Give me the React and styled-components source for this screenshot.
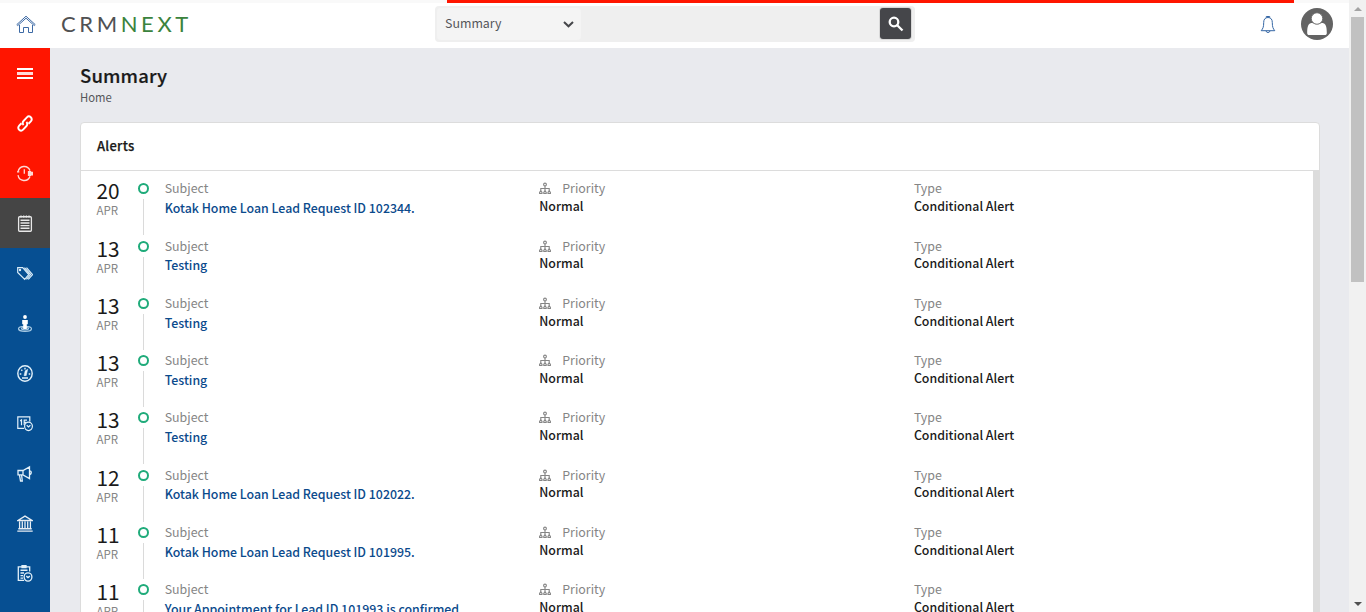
import React from 'react';
import styled, { createGlobalStyle } from 'styled-components';

const Global = createGlobalStyle`
  * { box-sizing: border-box; }
  body { margin: 0; overflow: hidden; font-family: "Noto Sans CJK SC", "Noto Sans", sans-serif; color: #1a1a1a; background: #e9eaee; }
`;

const Page = styled.div`display: flex; width: 1366px; height: 612px; overflow: hidden;`;
const Shell = styled.div`display: flex; flex-direction: column; width: 1349px; height: 612px; overflow: hidden;`;
const Progress = styled.div`height: 3px; flex: none; background: #f9f9f9;`;
const ProgressBar = styled.div`height: 3px; width: 847px; margin-left: 447px; background: #ff1500;`;
const Header = styled.header`display: flex; height: 45px; flex: none; background: #fff;`;
const HomeLink = styled.div`width: 61px; padding: 12px 0 0 16px;`;
const Logo = styled.div`
  width: 374px; padding-top: 6px; font: 400 22px/30px Lato, sans-serif; letter-spacing: 3.6px; color: #505153; white-space: nowrap;
`;
const LogoAccent = styled.span`color: #3b833d;`;
const Search = styled.div`
  display: flex; width: 480px; height: 36px; margin-top: 3px; padding: 2px; border-radius: 4px; background: #efefef;
`;
const SearchScope = styled.div`
  display: flex; justify-content: space-between; align-items: center; width: 144px; height: 32px; padding: 0 7px 0 8px;
  border-radius: 4px; background: #f4f4f4; color: #55565a; font-size: 12.4px; line-height: 20px;
`;
const ScopeName = styled.span`padding-bottom: 2px;`;
const SearchButton = styled.div`
  display: flex; align-items: center; justify-content: center; width: 31px; height: 31px; margin-left: auto; margin-right: 2px;
  border-radius: 3px; background: #45464a; box-shadow: 0 0 0 1px #d8d8d8;
`;
const Bell = styled.div`margin: 12px 0 0 345px; width: 41px;`;
const Avatar = styled.div`margin-top: 5px;`;
const Body = styled.div`display: flex; flex: 1; min-height: 0;`;
const Sidebar = styled.nav`width: 50px; flex: none; background: #064f92;`;
const NavItem = styled.div`
  display: flex; align-items: center; justify-content: center; height: 50px; padding-top: 1px; background: ${p => p.$bg || '#064f92'};
`;
const Main = styled.main`flex: 1; min-width: 0; padding: 15px 29px 0 30px; overflow: hidden;`;
const Title = styled.h1`
  margin: 0; font-size: 18.500px; line-height: 24px; font-weight: 500; letter-spacing: .15px; -webkit-text-stroke: .2px currentColor;
`;
const Crumb = styled.div`margin-top: 1px; height: 34px; font-size: 11.3px; line-height: 18px; color: #55565a;`;
const Card = styled.section`height: 560px; border: 1px solid #dcdcdc; border-radius: 4px; background: #fff; overflow: hidden;`;
const CardHead = styled.h2`
  margin: 0; height: 48px; padding: 0 16px; font-size: 13px; line-height: 45px; font-weight: 500; letter-spacing: .25px;
  -webkit-text-stroke: .25px currentColor; border-bottom: 1px solid #dcdcdc;
`;
const CardBody = styled.div`display: flex; height: 512px;`;
const Rows = styled.div`flex: 1; padding-top: 8.49px;`;
const InnerTrack = styled.div`width: 6px; background: #dcdcdc;`;
const Row = styled.div`display: flex; height: 57.26px; padding-left: 15.500px;`;
const DateCell = styled.div`width: 41.500px;`;
const Day = styled.div`height: 22px; font-size: 20.800px; line-height: 22px;`;
const Month = styled.div`padding-top: .9px; font-size: 11.500px; line-height: 17px; color: #858585;`;
const Marker = styled.div`display: flex; flex-direction: column; align-items: center; width: 11px; margin-right: 15.700px; padding-top: 4px;`;
const Ring = styled.div`width: 11px; height: 11px; border: 2px solid #1fab7a; border-radius: 50%;`;
const Line = styled.div`width: 1px; height: 36px; margin-top: 5px; background: #dadada;`;
const Cell = styled.div`width: ${p => p.$w || 374.6}px;`;
const Label = styled.div`display: flex; align-items: center; gap: 10px; height: 18px; font-size: 12.4px; line-height: 18px; color: #858585;`;
const Value = styled.div`
  margin-top: -.3px; font-size: 12.36px; line-height: 18px; font-weight: 500; white-space: nowrap;
  ${p => p.$link && 'color: #0b4a8c; padding-top: 1.95px;'}
`;
const Scrollbar = styled.div`display: flex; flex-direction: column; align-items: center; width: 17px; height: 612px; background: #f1f1f1;`;
const ScrollEnd = styled.div`display: flex; align-items: center; justify-content: center; height: 17px;`;
const Thumb = styled.div`width: 13px; height: 265px; margin-bottom: auto; background: #c1c1c1;`;

const Icon = ({ stroke = '#fff', width = 1.1, children }) => (
  <svg width="16" height="17" viewBox="0 0 16 16" preserveAspectRatio="none" fill="none" stroke={stroke} strokeWidth={width}>{children}</svg>
);

const HomeIcon = () => (
  <svg width="20" height="19" viewBox="0 0 20 19" fill="none" stroke="#3d6aa5" strokeWidth="1">
    <path d="M.8 9.6 10 1.2l9.2 8.4-1 .9L10 3.2 1.8 10.500z" />
    <path d="M3.500 10v7.500h4v-5h5v5h4V10" />
  </svg>
);
const BellIcon = () => (
  <svg width="16" height="20" viewBox="0 0 16 20" fill="none" stroke="#3567a5" strokeWidth="1">
    <path d="M6.300 2.500V1.500h3.400v1M8 2.500c-3 0-4.300 2-4.300 5C3.700 12 3 13.500 1.200 15.700h13.600C13 13.500 12.300 12 12.300 7.500c0-3-1.300-5-4.300-5zM6 16c.3 2 3.700 2 4 0" />
  </svg>
);
const AvatarIcon = () => (
  <svg width="32" height="32" viewBox="0 0 32 32">
    <circle cx="16" cy="16" r="16" fill="#636363" />
    <path d="M6.200 25c0-5 .5-8.800 3.300-9.800 1.300-.5 2.500-.4 3.500.2 1.800 1.200 4.200 1.200 6 0 1-.6 2.200-.7 3.500-.2 2.800 1 3.300 4.800 3.300 9.800 0 1.500-.7 2-2 2H8.200c-1.300 0-2-.5-2-2z" fill="#fff" />
    <circle cx="16" cy="10.500" r="5.700" fill="#fff" stroke="#636363" strokeWidth=".8" />
  </svg>
);
const TreeIcon = () => (
  <svg width="13" height="14" viewBox="0 0 13 14" fill="none" stroke="#858585" strokeWidth="1.100">
    <circle cx="6" cy="3.500" r="1.400" /><path d="M6 5v5M1.800 10V7.500h8.400V10" />
    <path d="M.6 12.500v-1.200l1.200-1.200L3 11.300v1.200zM4.800 12.500v-1.200L6 10.100l1.200 1.200v1.200zM9 12.500v-1.200l1.200-1.200 1.200 1.200v1.200z" />
  </svg>
);

const MenuIcon = () => (
  <svg width="16" height="11" viewBox="0 0 16 11" fill="#fff"><path d="M0 0h16v2H0zM0 9h16v2H0z" /><path d="M0 4h16v3H0z" opacity=".85" /></svg>
);
const LinkIcon = () => (
  <Icon width={1.900}>
    <path d="M6.600 9.400C5.300 8 5.500 6.700 6.500 5.700l3.400-3.500c1.200-1.200 2.800-1.100 3.900-.1 1.100 1.100 1.100 2.700 0 3.900l-2.300 2.300" />
    <path d="M9.400 6.600c1.300 1.400 1.100 2.700.1 3.700l-3.400 3.500c-1.200 1.200-2.800 1.100-3.900.1-1.100-1.100-1.100-2.700 0-3.900l2.300-2.300" />
  </Icon>
);
const ClockIcon = () => (
  <Icon stroke="#ffd9d5" width={1.300}>
    <path d="M1 6.500A6.300 6.300 0 0 1 13 5.300M1 9.500a6.300 6.300 0 0 0 12 1.200M7.300 4v4.300" />
    <path d="M0 6.500h2.300M11.500 6.300h2v3.400h-2zM13.500 7h2v2.300h-2z" fill="#ffd9d5" />
  </Icon>
);
const NotesIcon = () => (
  <Icon stroke="#e8e8e8" width={1.300}>
    <rect x="1.600" y="1.600" width="12.800" height="13.700" rx="1" /><path d="M4 .4v2M6.700.4v2M9.400.4v2M12 .4v2M3.500 5h9M3.500 7.500h9M3.500 10h9M3.500 12.500h9" />
  </Icon>
);
const TagsIcon = () => (
  <Icon stroke="#d9ecf8" width={1.200}>
    <path d="M.7 2.500h5l6 6.500-4 4.500L.7 7zM7.500 2.500l6 6.500-4 4.500M9.500 2.500l6 6.500-4.200 4.500" /><circle cx="3" cy="4.700" r=".6" />
  </Icon>
);
const PersonIcon = () => (
  <Icon stroke="#a9cbe4" width={1.200}>
    <ellipse cx="8" cy="13" rx="6.500" ry="2.400" /><ellipse cx="8" cy="12.800" rx="3.500" ry="1.200" />
    <circle cx="8" cy="1.900" r="1.900" fill="#fff" stroke="none" /><path d="M5.200 4.700h5.600v4H9.800v4.500H6.200V8.700h-1z" fill="#fff" stroke="none" />
  </Icon>
);
const GaugeIcon = () => (
  <Icon stroke="#e3f1fa" width={1.400}>
    <circle cx="8" cy="8" r="7.200" /><path d="M2.800 8.500h1.500M11.700 8.500h1.500M4.300 4.500l1 1M8 2.700v1.500M5 12.300h6" /><path d="M7 10l1.200-4.500 2.500-1.500L9.200 10z" fill="#e3f1fa" strokeWidth=".5" />
  </Icon>
);
const CalendarIcon = () => (
  <Icon stroke="#e3f1fa" width={1.200}>
    <path d="M7 12.500H.8V1.700h12V6M3.200 5.500l1.300-.8v5M10 4.800H7.200v4.700M7.200 7h2" /><circle cx="11.500" cy="10.700" r="3.900" /><path d="M9.700 9.700l1.800 1.500 1.900-1.500" />
  </Icon>
);
const MegaphoneIcon = () => (
  <Icon stroke="#e3f1fa" width={1.300}>
    <path d="M1 5.200h5l6.500-3.500v11L6 9.300H1zM6 5.200v4M2.500 9.500l1 5.500h1.800l-.7-5.500M13 5.500c1.700.3 1.700 3 0 3.400" />
  </Icon>
);
const BankIcon = () => (
  <Icon stroke="#e8eef4" width={1.300}>
    <path d="M.8 5.200 8 1l7.200 4.200zM2.600 6v6.500M5.300 6v6.500M8 6v6.500M10.700 6v6.500M13.400 6v6.500M1.300 13h13.400M.3 15.200h15.400" />
  </Icon>
);
const TaskIcon = () => (
  <Icon stroke="#e3f1fa" width={1.300}>
    <path d="M7 14.500H1.300V1.800h11.400V6M5 .7h4v1.800H5zM3.500 5h7M3.500 7.500H7M3.500 10H6M3.500 12.300H6" /><circle cx="11" cy="11.300" r="3.900" /><path d="M9.300 10.500l1.700 1.400 1.800-1.400" />
  </Icon>
);

const NAV = [
  [MenuIcon, '#ff1500'], [LinkIcon, '#ff1500'], [ClockIcon, '#ff1500'], [NotesIcon, '#454545'], [TagsIcon], [PersonIcon],
  [GaugeIcon], [CalendarIcon], [MegaphoneIcon], [BankIcon], [TaskIcon],
];

const ALERTS = [
  ['20', 'Kotak Home Loan Lead Request ID 102344.'],
  ['13', 'Testing'],
  ['13', 'Testing'],
  ['13', 'Testing'],
  ['13', 'Testing'],
  ['12', 'Kotak Home Loan Lead Request ID 102022.'],
  ['11', 'Kotak Home Loan Lead Request ID 101995.'],
  ['11', 'Your Appointment for Lead ID 101993 is confirmed'],
];

const AlertRow = ({ day, subject }) => (
  <Row>
    <DateCell><Day>{day}</Day><Month>APR</Month></DateCell>
    <Marker><Ring /><Line /></Marker>
    <Cell><Label>Subject</Label><Value $link>{subject}</Value></Cell>
    <Cell><Label><TreeIcon />Priority</Label><Value>Normal</Value></Cell>
    <Cell $w={200}><Label>Type</Label><Value>Conditional Alert</Value></Cell>
  </Row>
);

export default function App() {
  return (
    <Page>
      <Global />
      <Shell>
        <Progress><ProgressBar /></Progress>
        <Header>
          <HomeLink><HomeIcon /></HomeLink>
          <Logo>CRM<LogoAccent>NEXT</LogoAccent></Logo>
          <Search>
            <SearchScope>
              <ScopeName>Summary</ScopeName>
              <svg width="11" height="7" viewBox="0 0 11 7" fill="none" stroke="#45464a" strokeWidth="2"><path d="M1 1l4.500 4.300L10 1" /></svg>
            </SearchScope>
            <SearchButton>
              <svg width="16" height="16" viewBox="0 0 16 16" fill="none" stroke="#fff" strokeWidth="2.300"><circle cx="6" cy="6" r="4.300" /><path d="M9 9l5.500 5.500" /></svg>
            </SearchButton>
          </Search>
          <Bell><BellIcon /></Bell>
          <Avatar><AvatarIcon /></Avatar>
        </Header>
        <Body>
          <Sidebar>{NAV.map(([Glyph, bg], i) => <NavItem key={i} $bg={bg}><Glyph /></NavItem>)}</Sidebar>
          <Main>
            <Title>Summary</Title>
            <Crumb>Home</Crumb>
            <Card>
              <CardHead>Alerts</CardHead>
              <CardBody>
                <Rows>{ALERTS.map(([day, subject], i) => <AlertRow key={i} day={day} subject={subject} />)}</Rows>
                <InnerTrack />
              </CardBody>
            </Card>
          </Main>
        </Body>
      </Shell>
      <Scrollbar>
        <ScrollEnd><svg width="8" height="4" viewBox="0 0 8 4"><path d="M0 4l4-4 4 4z" fill="#a3a3a3" /></svg></ScrollEnd>
        <Thumb />
        <ScrollEnd><svg width="8" height="4" viewBox="0 0 8 4"><path d="M0 0l4 4 4-4z" fill="#505050" /></svg></ScrollEnd>
      </Scrollbar>
    </Page>
  );
}
